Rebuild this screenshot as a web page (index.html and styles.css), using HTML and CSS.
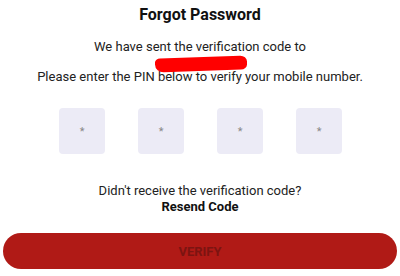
FILE: index.html
```html
<!DOCTYPE html>
<html lang="en">
<head>
    <meta charset="UTF-8">
    <meta name="viewport" content="width=device-width, initial-scale=1.0">
    <title>Forgot Password</title>
    <link rel="stylesheet" href="styles.css">
</head>
<body>
    <div class="page">
        <h1 class="title">Forgot Password</h1>
        <p class="info">We have sent the verification code to</p>
        <div class="number"><span class="scribble"></span></div>
        <p class="info">Please enter the PIN below to verify your mobile number.</p>
        <div class="pins">
            <div class="pin">*</div>
            <div class="pin">*</div>
            <div class="pin">*</div>
            <div class="pin">*</div>
        </div>
        <p class="resend-text">Didn't receive the verification code?</p>
        <a class="resend" href="#">Resend Code</a>
        <button class="verify">VERIFY</button>
    </div>
</body>
</html>
```

FILE: styles.css
```css
body {
    margin: 0;
    background-color: #fff;
    font-family: Roboto, "Liberation Sans", sans-serif;
    color: #222;
}

.page {
    display: flex;
    flex-direction: column;
    align-items: center;
    padding: 5px 3px 0;
}

.title {
    margin: 0;
    font-size: 16px;
    font-weight: 700;
    line-height: 20px;
    color: #111;
}

.info {
    margin: 0;
    font-size: 13px;
    line-height: 16px;
}

.info:first-of-type {
    margin-top: 14px;
}

.number {
    height: 14px;
    width: 94px;
    margin-left: 4px;
}

.scribble {
    display: block;
    width: 92px;
    height: 14px;
    margin-top: 2px;
    background-color: #f00;
    border-radius: 5px 7px 6px 9px / 4px 6px 5px 8px;
    transform: skewY(-2deg);
}

.pins {
    display: flex;
    gap: 33px;
    margin-top: 23px;
    margin-left: 1px;
}

.pin {
    width: 46px;
    height: 46px;
    border-radius: 4px;
    background-color: #ecebf6;
    color: #888;
    font-size: 11px;
    display: flex;
    align-items: center;
    justify-content: center;
}

.resend-text {
    margin: 29px 0 0;
    font-size: 13px;
    line-height: 16px;
}

.resend {
    font-size: 13px;
    font-weight: 700;
    line-height: 16px;
    color: #111;
    text-decoration: none;
}

.verify {
    margin-top: 18px;
    width: 394px;
    height: 36px;
    border: none;
    border-radius: 18px;
    background-color: #b01a16;
    color: #7c1411;
    font-family: Roboto, "Liberation Sans", sans-serif;
    font-size: 13px;
    font-weight: 700;
}
```
